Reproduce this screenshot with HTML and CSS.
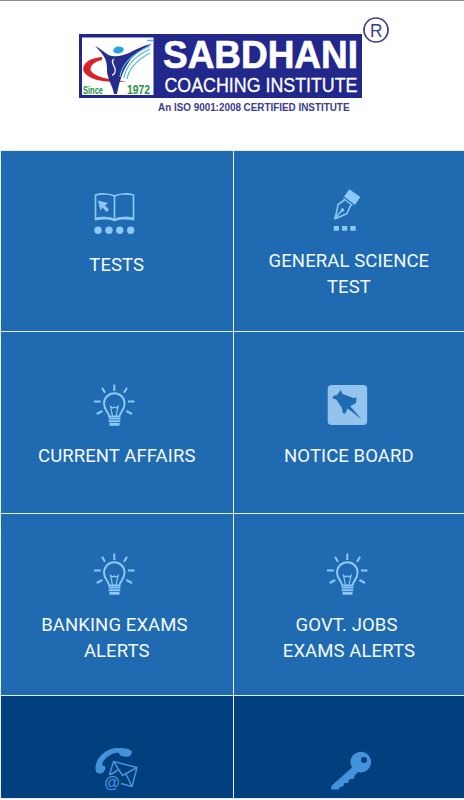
FILE: index.html
```html
<!DOCTYPE html>
<html lang="en">
<head>
    <meta charset="UTF-8">
    <meta name="viewport" content="width=device-width, initial-scale=1.0">
    <title>Sabdhani Coaching Institute</title>
    <link rel="stylesheet" href="styles.css">
</head>
<body>
    <svg width="0" height="0" class="defs">
        <symbol id="bulb" viewBox="0 0 48 48">
            <g fill="none" stroke="currentColor" stroke-width="2">
                <path d="M19.200 35.500C19 31.500 14 29 14 22.500A10.300 10.300 0 0 1 34.600 22.500C34.600 29 29.700 31.500 29.500 35.500z"/>
                <path d="M24.300 3.500V10M12 6.700l3 5M37 6.700l-3 5M4 20.400h6.700M38 20.400h6.500M6.700 33l5.600-3M42 33l-5.600-3"/>
                <path d="M22.500 35l-2-9.500 2 1.500 1.800-1 1.800 1 2-1.500-2 9.500" stroke-width="1.200"/>
            </g>
            <path d="M18.700 36.700h11.600v1.800H18.700zM18.700 39.300h11.600v1.900H18.700zM19.500 42h10v2.700h-10z" fill="currentColor"/>
        </symbol>
    </svg>

    <header class="header">
        <svg class="logo" viewBox="0 0 464 149">
            <rect x="79" y="34" width="283" height="64" fill="#22278c"/>
            <rect x="82" y="37.500" width="71.500" height="57.500" fill="#fff"/>
            <!-- figure with swoosh -->
            <path d="M102 57C88 58 81 65 84 72c5 8 20 11 43 9.500-17-1.500-32-4.500-36-10.500-2-5 3-9 11-11z" fill="#d8232a"/>
            <path d="M95 46c7 3 11 9 17 10 7 1 11-1 17-3 8-4 15-8 23-9-12 6-20 12-25 21-5 8-8 18-10 29h-3c-1-8-8-17-7-26 0-10-5-15-12-22z" fill="#262c8c"/>
            <path d="M114 59c-5 3 3 8 1 13q-1 3-3 3" fill="none" stroke="#fff" stroke-width="1.200"/>
            <path d="M150 46c-16 7-28 16-30 31M150 49c-15 7-24 16-26 29M150 53c-13 7-21 15-23 26" fill="none" stroke="#55b8e8" stroke-width="1.300"/>
            <ellipse cx="118.500" cy="50" rx="5.300" ry="3.500" fill="#2aa2df" transform="rotate(-10 118.500 50)"/>
            <path d="M147 40.500h6" stroke="#55b8e8" stroke-width="1.500"/>
            <g class="logo-text">
                <text x="83" y="93.500" font-size="10.500" textLength="20" lengthAdjust="spacingAndGlyphs" fill="#1f9447">Since</text>
                <text x="127" y="93.500" font-size="12" textLength="23" lengthAdjust="spacingAndGlyphs" fill="#1f9447">1972</text>
                <text x="163" y="68" font-size="38" textLength="195" lengthAdjust="spacingAndGlyphs" fill="#fff" stroke="#fff" stroke-width=".7">SABDHANI</text>
                <text x="164.500" y="92" font-size="20.500" font-weight="400" textLength="193" lengthAdjust="spacingAndGlyphs" fill="#fff" stroke="#fff" stroke-width=".3">COACHING INSTITUTE</text>
                <text x="158" y="111" font-size="11" textLength="191.500" lengthAdjust="spacingAndGlyphs" fill="#3a3c91">An ISO 9001:2008 CERTIFIED INSTITUTE</text>
                <text x="370" y="36.500" font-size="18.500" font-weight="400" textLength="12.500" lengthAdjust="spacingAndGlyphs" fill="#3a3c91">R</text>
            </g>
            <circle cx="376" cy="30" r="12" fill="none" stroke="#3a3c91" stroke-width="1.700"/>
        </svg>
    </header>

    <main class="menu">
        <div class="tile tile-tests">
            <svg class="icon" viewBox="0 0 48 48">
                <path d="M24.500 6C20 3.500 11 3.500 5.500 5v24C11 27 20 27 24.500 30 29 27 38 27 43.500 29V5C38 3.500 29 3.500 24.500 6zM24.500 6v23" fill="none" stroke="currentColor" stroke-width="1.700"/>
                <path d="M5 28c6-2 15-1.500 19.500 1C29 26.500 38 26 44 28v2.500c-7-1.500-15-1.500-19.500 1-4.500-2.500-12.500-2.500-19.500-1zM8 10.500l10 2.500-3 2.500 4 4-2.500 2.500-4-4.500-2.200 3z" fill="currentColor"/>
                <g fill="currentColor"><circle cx="8" cy="40.300" r="3.700"/><circle cx="19" cy="40.300" r="3.700"/><circle cx="29.700" cy="40.300" r="3.700"/><circle cx="40.700" cy="40.300" r="3.700"/></g>
            </svg>
            <p class="label">TESTS</p>
        </div>
        <div class="tile tile-science">
            <svg class="icon icon-right" viewBox="0 0 48 48">
                <path d="M26.300 3.300L37.300 11 32 19 21 10.500zM10.700 40H16v4.700h-5.300zM19 40h5.300v4.700H19zM27.300 40h5.400v4.700h-5.400z" fill="currentColor"/>
                <path d="M21.500 14L15 18.500C14.500 24 13 28 11.800 32.700 16 31.500 20 29.500 24 27.500L28 18.500M12 32.300l7.300-8.300" fill="none" stroke="currentColor" stroke-width="1.600" stroke-linejoin="round"/>
                <path d="M20.500 12.500l9 7" stroke="currentColor" stroke-width="1.500"/>
                <circle cx="19.500" cy="24" r="1.800" fill="currentColor"/>
            </svg>
            <p class="label">GENERAL SCIENCE<br>TEST</p>
        </div>
        <div class="tile tile-single">
            <svg class="icon"><use href="#bulb"/></svg>
            <p class="label">CURRENT AFFAIRS</p>
        </div>
        <div class="tile tile-single">
            <svg class="icon icon-right icon-pin" viewBox="0 0 48 48">
                <rect x="4.700" y="4" width="39.500" height="40" rx="4" fill="currentColor"/>
                <path d="M17.700 8.700L19.500 13 30.300 17 33.500 16.500 33 22 27.300 25.300 38.500 38.200 24.700 27.500 22 33 19.500 31.500 19 27 13.300 18.500 9.300 17.300 10.500 15 14.500 13.800z" fill="#206ab1"/>
            </svg>
            <p class="label">NOTICE BOARD</p>
        </div>
        <div class="tile">
            <svg class="icon"><use href="#bulb"/></svg>
            <p class="label">BANKING EXAMS&nbsp;<br>ALERTS</p>
        </div>
        <div class="tile">
            <svg class="icon icon-right"><use href="#bulb"/></svg>
            <p class="label">GOVT. JOBS&nbsp;<br>EXAMS ALERTS</p>
        </div>
        <div class="tile tile-dark">
            <svg class="icon" viewBox="0 0 48 48">
                <path d="M6 25.500C3 16 13 3 26 2c7-.5 14 .5 15.500 3 1 2-1 5-3 5.500-3 .5-8 0-9-2 0-1.500-1-2-3-1.700C20 8 14 13 12.500 17c-.5 2 0 3 1.500 3 2.500 1 1.500 4-1 6.500-2 1.500-5.500 1.500-7-1z" fill="currentColor"/>
                <path d="M19.500 29L23.500 15.500 47 21.500 42 40.500 31 37.500M23.500 15.500l9 14L47 21.500M20 29l8-5M36 28l6 12.500" fill="none" stroke="currentColor" stroke-width="1.500" stroke-linejoin="round"/>
                <text x="22" y="42" class="at">@</text>
            </svg>
        </div>
        <div class="tile tile-dark">
            <svg class="icon icon-right" viewBox="0 0 48 48">
                <path fill-rule="evenodd" d="M29 21.500A10.300 10.300 0 1 1 35 26l-3 3-1.500 4h-4l-1.500 4h-3.500L20 40.500l-3 .5-1.500 2.500H8.300V40zM41 11a3 3 0 1 0 0 6 3 3 0 0 0 0-6z" fill="currentColor"/>
            </svg>
        </div>
    </main>
</body>
</html>
```
FILE: styles.css
```css
body {
    margin: 0;
    height: 800px;
    overflow: hidden;
    background-color: #fff;
    font-family: Roboto, "Liberation Sans", sans-serif;
}

.defs {
    display: block;
}

.header {
    height: 149px;
    border-top: 1px solid #8a8a8a;
}

.logo {
    display: block;
    width: 464px;
    height: 149px;
    margin-top: -1px;
}

.logo-text {
    font-family: "Liberation Sans", Arial, sans-serif;
    font-weight: bold;
}

.menu {
    display: grid;
    grid-template-columns: 231.5px 230.2px;
    grid-template-rows: 180px 180.5px 180.5px 102px;
    gap: 1.5px 1.3px;
    height: 648px;
    padding: 0.5px 0 0 1px;
    background-color: #e4f0f8;
}

.tile {
    display: flex;
    flex-direction: column;
    align-items: center;
    box-sizing: border-box;
    padding-top: 36px;
    background-color: #206ab1;
    color: #8bc8fb;
}

.tile-tests {
    padding-top: 39px;
}

.tile-science {
    padding-top: 35px;
}

.tile-single {
    padding-top: 49px;
}

.tile-dark {
    padding-top: 50px;
    background-color: #003f7d;
    color: #4592dc;
}

.icon {
    width: 48px;
    height: 48px;
    margin-right: 5px;
    overflow: visible;
}

.icon-right {
    margin-right: 3px;
}

.icon-pin {
    color: #92c4ee;
}

.label {
    margin: 14px 0 0;
    color: #f3fbff;
    font-size: 18.5px;
    line-height: 26px;
    letter-spacing: 0.1px;
    text-align: center;
}

.at {
    font: bold 16px "Liberation Sans", Arial, sans-serif;
    text-anchor: middle;
    fill: #4592dc;
    stroke: #003f7d;
    stroke-width: 2px;
    paint-order: stroke;
}
```
